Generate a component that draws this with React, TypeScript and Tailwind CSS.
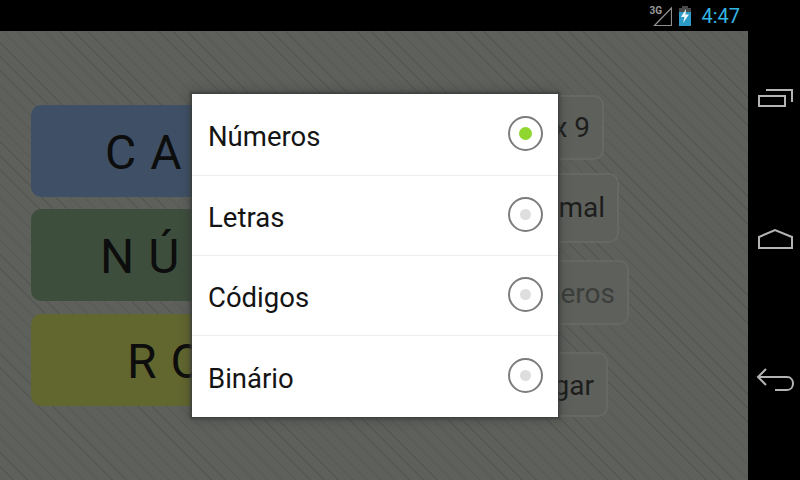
import { Fragment } from "react";

const LEFT_BUTTONS = [
  { label: "CA", className: "mt-[74px] h-[92px] bg-[#3f5066] pl-[74px] pt-[3px]" },
  { label: "NÚ", className: "mt-[12px] h-[92px] bg-[#3e4e3d] pl-[69px] pt-[3px]" },
  { label: "RO", className: "mt-[13px] h-[92px] bg-[#62672f] pl-[96px] pt-[3px]" },
];

const RIGHT_BUTTONS = [
  { label: "9 x 9", className: "mt-[64px] h-[65px] w-[124px] text-[#1d1e1c]" },
  { label: "Decimal", className: "mt-[13px] h-[70px] w-[139px] text-[#1d1e1c]" },
  { label: "Números", className: "mt-[17px] h-[65px] w-[149px] pt-[3px] text-[#3c3e3b]" },
  { label: "Jogar", className: "mt-[27px] h-[65px] w-[128px] pt-[2px] text-[#1d1e1c]" },
];

const OPTIONS = [
  { label: "Números", className: "h-[82px]" },
  { label: "Letras", className: "h-[80px]" },
  { label: "Códigos", className: "h-[80px]" },
  { label: "Binário", className: "h-[81px]" },
];

function StatusIcons() {
  return (
    <Fragment>
      <div className="relative h-[24px] w-[24px]">
        <span className="absolute left-[1px] top-[1px] text-[10px] font-bold leading-[12px] text-[#9a9a9a]">3G</span>
        <svg width="24" height="24" viewBox="0 0 24 24" fill="none" className="absolute left-0 top-0">
          <path d="M6.5 21.5H23.5V4Z" stroke="#8f8f8f" strokeWidth="1.2" />
        </svg>
      </div>
      <svg width="14" height="20" viewBox="0 0 14 20" className="ml-[6px]">
        <path d="M4 0H10V2H13V20H1V2H4Z" fill="#4a4a4a" />
        <path d="M1 6H13V20H1Z" fill="#2d9bc8" />
        <path d="M8 3L3 11H6.5L5 17L11 8.5H7.5Z" fill="#eef8fc" />
      </svg>
    </Fragment>
  );
}

function Radio({ checked }: { checked: boolean }) {
  return (
    <div className="-mt-[3px] flex h-[35px] w-[35px] items-center justify-center rounded-full border-2 border-[#7c7c7c] bg-white">
      {checked ? (
        <div className="h-[13px] w-[13px] rounded-full bg-[#8fd62f]" />
      ) : (
        <div className="h-[11px] w-[11px] rounded-full bg-[#dedede]" />
      )}
    </div>
  );
}

export default function App() {
  return (
    <div className="flex h-[480px] w-[800px] flex-col overflow-hidden bg-black font-['Roboto',sans-serif]">
      {/* Barra de status */}
      <div className="flex h-[31px] items-center justify-end pr-[60px]">
        <StatusIcons />
        <span className="ml-[9px] text-[20px] leading-none text-[#33b5e5]">4:47</span>
      </div>

      <div className="flex flex-1">
        <main className="relative flex w-[748px] bg-[#5e605c] bg-[repeating-linear-gradient(45deg,#5e605c_0px,#5e605c_9px,#555754_9px,#555754_10px)]">
          <div className="ml-[31px] flex w-[420px] flex-col">
            {LEFT_BUTTONS.map((b) => (
              <div
                key={b.label}
                className={`flex items-center rounded-[10px] text-[48px] tracking-[14px] text-[#0c0d0c] ${b.className}`}
              >
                {b.label}
              </div>
            ))}
          </div>

          <div className="ml-[29px] flex flex-col">
            {RIGHT_BUTTONS.map((b) => (
              <div
                key={b.label}
                className={`flex items-center justify-end rounded-[10px] border-2 border-[#666864] bg-[#5e605c] pr-[12px] text-[28px] ${b.className}`}
              >
                {b.label}
              </div>
            ))}
          </div>

          {/* Diálogo de seleção */}
          <div className="absolute left-[192px] top-[63px] flex w-[366px] flex-col bg-white shadow-[0_0_2px_2px_rgba(60,62,60,0.8),0_0_10px_3px_rgba(40,40,40,0.3)]">
            {OPTIONS.map((option, i) => (
              <div
                key={option.label}
                className={`flex items-center justify-between border-b border-[#eeeeee] pl-[16px] pr-[15px] text-[27.5px] text-[#141414] last:border-b-0 ${option.className}`}
              >
                <span className="pt-[4px]">{option.label}</span>
                <Radio checked={i === 0} />
              </div>
            ))}
          </div>
        </main>

        {/* Barra de navegação */}
        <nav className="flex w-[52px] flex-col items-center">
          <svg width="52" height="24" viewBox="0 0 52 24" fill="none" stroke="#b4b4b4" strokeWidth="2" className="mt-[57px]">
            <path d="M11 8H37V18H11Z" />
            <path d="M18 2H44V14" />
          </svg>
          <svg width="52" height="24" viewBox="0 0 52 24" fill="none" stroke="#b4b4b4" strokeWidth="2" className="mt-[115px]">
            <path d="M11 21V10L27 3L44 10V21Z" />
          </svg>
          <svg width="52" height="26" viewBox="0 0 52 26" fill="none" stroke="#b4b4b4" strokeWidth="2" className="mt-[116px]">
            <path d="M18 2L10 10L18 18" />
            <path d="M10 10H39C47 10 47 23 39 23H27" />
          </svg>
        </nav>
      </div>
    </div>
  );
}
